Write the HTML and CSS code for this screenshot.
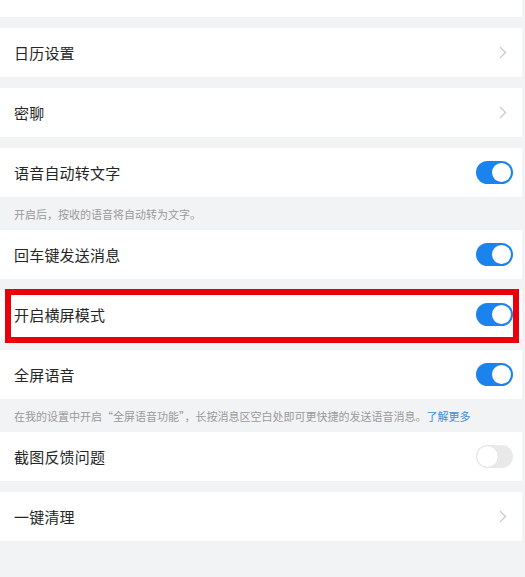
FILE: index.html
```html
<!DOCTYPE html>
<html lang="zh-CN">
<head>
<meta charset="utf-8">
<title>设置</title>
<link rel="stylesheet" href="styles.css">
</head>
<body>
<div class="page">
  <div class="top-block"></div>

  <div class="row">
    <span class="label">日历设置</span>
    <svg class="chevron" width="8" height="13" viewBox="0 0 8 13"><path d="M1 1 L6.5 6.5 L1 12" fill="none" stroke="#c9c9c9" stroke-width="1.2"/></svg>
  </div>

  <div class="row">
    <span class="label">密聊</span>
    <svg class="chevron" width="8" height="13" viewBox="0 0 8 13"><path d="M1 1 L6.5 6.5 L1 12" fill="none" stroke="#c9c9c9" stroke-width="1.2"/></svg>
  </div>

  <div class="row">
    <span class="label">语音自动转文字</span>
    <span class="toggle on"><span class="knob"></span></span>
  </div>
  <div class="caption">开启后，按收的语音将自动转为文字。</div>

  <div class="row no-gap">
    <span class="label">回车键发送消息</span>
    <span class="toggle on"><span class="knob"></span></span>
  </div>

  <div class="row highlighted">
    <span class="label">开启横屏模式</span>
    <span class="toggle on"><span class="knob"></span></span>
    <span class="mark"></span>
  </div>

  <div class="row">
    <span class="label">全屏语音</span>
    <span class="toggle on"><span class="knob"></span></span>
  </div>
  <div class="caption">在我的设置中开启“全屏语音功能”，长按消息区空白处即可更快捷的发送语音消息。<span class="link">了解更多</span></div>

  <div class="row no-gap">
    <span class="label">截图反馈问题</span>
    <span class="toggle off"><span class="knob"></span></span>
  </div>

  <div class="row">
    <span class="label">一键清理</span>
    <svg class="chevron" width="8" height="13" viewBox="0 0 8 13"><path d="M1 1 L6.5 6.5 L1 12" fill="none" stroke="#c9c9c9" stroke-width="1.2"/></svg>
  </div>
</div>
</body>
</html>
```

FILE: styles.css
```css
html, body {
  margin: 0;
  padding: 0;
  background: #f2f3f5;
}

.page {
  width: 525px;
  height: 577px;
  overflow: hidden;
  background: #f2f3f5;
  font-family: "Noto Sans CJK SC", "Noto Sans", sans-serif;
  display: flex;
  flex-direction: column;
  padding-right: 3px;
  box-sizing: border-box;
}

.top-block {
  height: 17px;
  background: #fff;
}

.row {
  position: relative;
  height: 49px;
  margin-top: 11px;
  background: #fff;
  display: flex;
  align-items: center;
  justify-content: space-between;
  padding: 0 9px 0 14px;
  flex-shrink: 0;
}

.row.no-gap {
  margin-top: 0;
}

.label {
  font-size: 15px;
  color: #262626;
  letter-spacing: 0.2px;
}

.chevron {
  margin-right: 6px;
}

.caption {
  height: 33px;
  display: flex;
  align-items: center;
  padding-left: 14px;
  font-size: 11px;
  color: #9a9a9a;
  flex-shrink: 0;
}

.caption .link {
  color: #3b8fe0;
}

.toggle {
  position: relative;
  width: 37px;
  height: 23px;
  border-radius: 12px;
  display: flex;
  align-items: center;
  box-sizing: border-box;
}

.toggle.on {
  background: #1a83ee;
  justify-content: flex-end;
  padding-right: 2px;
}

.toggle.off {
  background: #e9e9ea;
  justify-content: flex-start;
  padding-left: 1px;
}

.knob {
  width: 19px;
  height: 19px;
  border-radius: 50%;
  background: #fff;
}

.toggle.off .knob {
  width: 21px;
  height: 21px;
  box-shadow: 0 0 1px rgba(0,0,0,0.15);
}

.mark {
  position: absolute;
  left: 5px;
  top: -1px;
  width: 514px;
  height: 54px;
  border: 6px solid #e8000b;
  box-sizing: border-box;
  pointer-events: none;
}
```
